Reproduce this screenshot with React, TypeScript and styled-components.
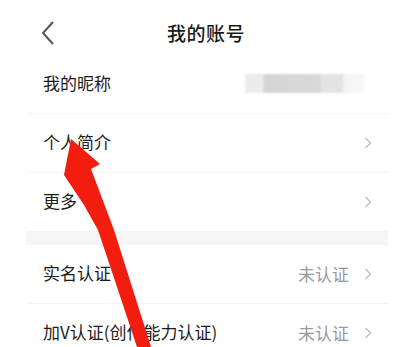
import React from "react";
import styled, { createGlobalStyle } from "styled-components";

const GlobalStyle = createGlobalStyle`
    html, body {
        margin: 0;
        padding: 0;
        background: #ffffff;
    }
    body {
        font-family: "Noto Sans CJK SC", "Noto Sans", sans-serif;
        color: #1c1c1c;
    }
`;

type Row = {
    label: string;
    value?: string;
    blurred?: boolean;
    chevron?: boolean;
};

const topRows: Row[] = [
    { label: "我的昵称", blurred: true },
    { label: "个人简介", chevron: true },
    { label: "更多", chevron: true },
];

const bottomRows: Row[] = [
    { label: "实名认证", value: "未认证", chevron: true },
    { label: "加V认证(创作能力认证)", value: "未认证", chevron: true },
];

const Chevron = () => (
    <svg width="8" height="12" viewBox="0 0 8 12">
        <path d="M1.5 1 L6.5 6 L1.5 11" fill="none" stroke="#bdbdbd" strokeWidth="1.4" />
    </svg>
);

const renderRows = (rows: Row[]) =>
    rows.map((row, i) => (
        <ListRow key={row.label} last={i === rows.length - 1}>
            <Label>{row.label}</Label>
            <Right>
                {row.blurred ? <Blur /> : null}
                {row.value ? <Value>{row.value}</Value> : null}
                {row.chevron ? <Chevron /> : null}
            </Right>
        </ListRow>
    ));

export default function App() {
    return (
        <Page>
            <GlobalStyle />
            <Header>
                <Back>
                    <svg width="16" height="26" viewBox="0 0 16 26">
                        <path d="M13 2 L3 13 L13 24" fill="none" stroke="#555" strokeWidth="2" />
                    </svg>
                </Back>
                <Title>我的账号</Title>
            </Header>
            <Panel>
                {renderRows(topRows)}
                <Band />
                {renderRows(bottomRows)}
            </Panel>
            {/* red pointer drawn over the list */}
            <Arrow viewBox="0 0 400 347" width="400" height="347">
                <polygon
                    points="71,139 100,164 91,169 114,230 152,350 138,350 98,230 84,205 64,175"
                    fill="#f21c0f"
                />
            </Arrow>
        </Page>
    );
}

const Page = styled.div`
    position: relative;
    width: 400px;
    height: 347px;
    overflow: hidden;
    background: #fff;
`;

const Header = styled.div`
    height: 55px;
    display: flex;
    align-items: center;
    justify-content: center;
    position: relative;
`;

const Back = styled.div`
    position: absolute;
    left: 40px;
    top: 20px;
    display: flex;
`;

const Title = styled.div`
    font-size: 19px;
    font-weight: 500;
    color: #1a1a1a;
    margin-left: 12px;
    margin-top: 10px;
    letter-spacing: 0.5px;
`;

const Panel = styled.div`
    margin: 0 12px 0 26px;
    display: flex;
    flex-direction: column;
`;

const ListRow = styled.div<{ last: boolean }>`
    height: 58px;
    display: flex;
    align-items: center;
    justify-content: space-between;
    padding: 0 16px 0 17px;
    border-bottom: ${(p) => (p.last ? "none" : "1px solid #f4f4f4")};
`;

const Label = styled.span`
    font-size: 17px;
    color: #1c1c1c;
    margin-top: -3px;
`;

const Right = styled.div`
    display: flex;
    align-items: center;
    gap: 15px;
`;

const Value = styled.span`
    font-size: 17px;
    color: #9a9a9a;
    margin-top: -2px;
`;

const Blur = styled.div`
    width: 119px;
    height: 19px;
    margin-top: -2px;
    margin-right: 8px;
    background: linear-gradient(
        90deg,
        #ececec 0%,
        #ececec 15%,
        #d6d6d6 16%,
        #d8d8d8 63%,
        #e2e2e2 64%,
        #e4e4e4 82%,
        #f4f4f4 83%,
        #f8f8f8 100%
    );
    filter: blur(1px);
`;

const Band = styled.div`
    height: 14px;
    background: #f5f5f5;
`;

const Arrow = styled.svg`
    position: absolute;
    left: 0;
    top: 0;
    pointer-events: none;
`;
